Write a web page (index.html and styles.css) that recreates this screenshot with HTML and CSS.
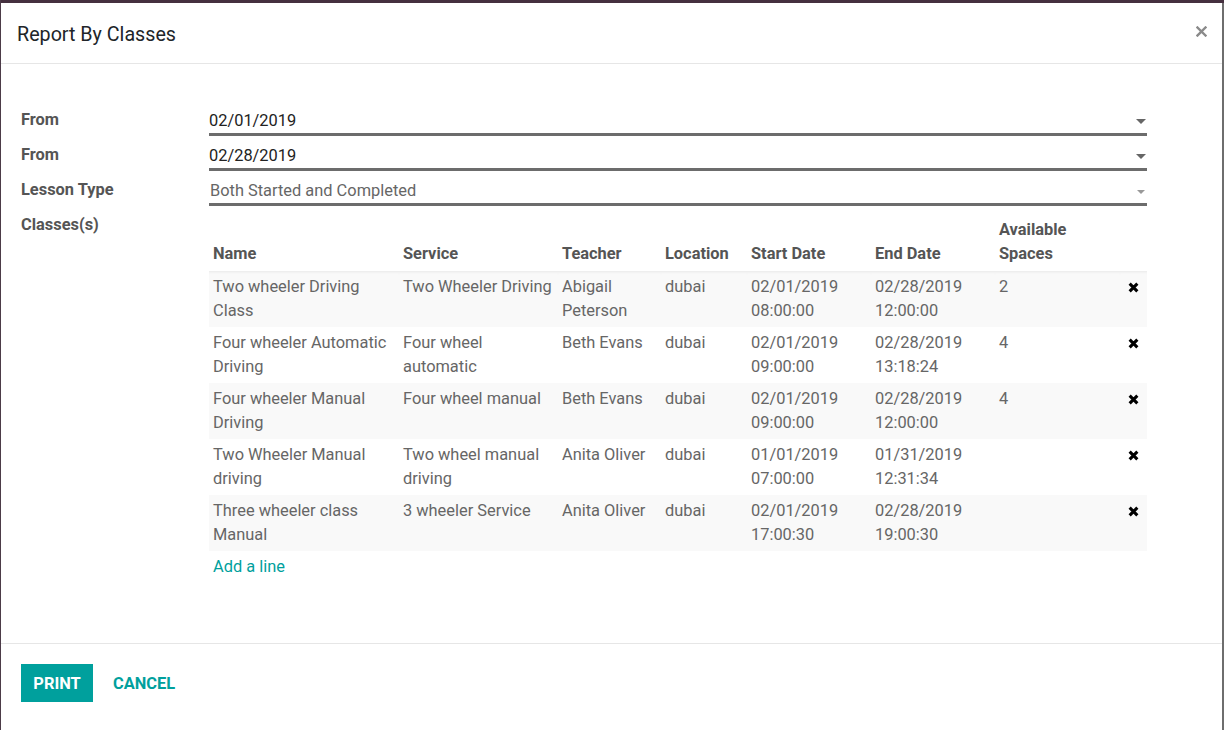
FILE: index.html
```html
<!DOCTYPE html>
<html>
<head>
<meta charset="utf-8">
<link rel="stylesheet" href="styles.css">
</head>
<body>
<div class="topbar"></div>
<div class="modal">
  <div class="modal-header">
    <h4 class="modal-title">Report By Classes</h4>
    <button class="close" aria-label="Close">
      <svg width="11" height="11" viewBox="0 0 11 11"><path d="M1.5 1.5 L9.5 9.5 M9.5 1.5 L1.5 9.5" stroke="#8a8a8a" stroke-width="2.4" stroke-linecap="square"/></svg>
    </button>
  </div>
  <div class="modal-body">
    <div class="field-row">
      <label class="field-label">From</label>
      <div class="field-input">
        <span class="value">02/01/2019</span>
        <span class="caret"></span>
      </div>
    </div>
    <div class="field-row">
      <label class="field-label">From</label>
      <div class="field-input">
        <span class="value">02/28/2019</span>
        <span class="caret"></span>
      </div>
    </div>
    <div class="field-row">
      <label class="field-label">Lesson Type</label>
      <div class="field-input select">
        <span class="value">Both Started and Completed</span>
        <span class="caret small"></span>
      </div>
    </div>
    <div class="field-row classes">
      <label class="field-label">Classes(s)</label>
      <div class="field-table">
        <table class="list">
          <colgroup>
            <col style="width:190px"><col style="width:159px"><col style="width:103px"><col style="width:86px"><col style="width:124px"><col style="width:124px"><col style="width:125px"><col style="width:27px">
          </colgroup>
          <thead>
            <tr>
              <th>Name</th><th>Service</th><th>Teacher</th><th>Location</th><th>Start Date</th><th>End Date</th><th>Available Spaces</th><th></th>
            </tr>
          </thead>
          <tbody>
            <tr class="odd first">
              <td>Two wheeler Driving Class</td><td>Two Wheeler Driving</td><td>Abigail Peterson</td><td>dubai</td><td>02/01/2019 08:00:00</td><td>02/28/2019 12:00:00</td><td>2</td><td class="del"><svg class="x" viewBox="0 0 10 10"><path d="M1.5 1.5 L8.5 8.5 M8.5 1.5 L1.5 8.5" stroke="#000" stroke-width="2.8"/></svg></td>
            </tr>
            <tr>
              <td>Four wheeler Automatic Driving</td><td>Four wheel automatic</td><td>Beth Evans</td><td>dubai</td><td>02/01/2019 09:00:00</td><td>02/28/2019 13:18:24</td><td>4</td><td class="del"><svg class="x" viewBox="0 0 10 10"><path d="M1.5 1.5 L8.5 8.5 M8.5 1.5 L1.5 8.5" stroke="#000" stroke-width="2.8"/></svg></td>
            </tr>
            <tr class="odd">
              <td>Four wheeler Manual Driving</td><td>Four wheel manual</td><td>Beth Evans</td><td>dubai</td><td>02/01/2019 09:00:00</td><td>02/28/2019 12:00:00</td><td>4</td><td class="del"><svg class="x" viewBox="0 0 10 10"><path d="M1.5 1.5 L8.5 8.5 M8.5 1.5 L1.5 8.5" stroke="#000" stroke-width="2.8"/></svg></td>
            </tr>
            <tr>
              <td>Two Wheeler Manual driving</td><td>Two wheel manual driving</td><td>Anita Oliver</td><td>dubai</td><td>01/01/2019 07:00:00</td><td>01/31/2019 12:31:34</td><td></td><td class="del"><svg class="x" viewBox="0 0 10 10"><path d="M1.5 1.5 L8.5 8.5 M8.5 1.5 L1.5 8.5" stroke="#000" stroke-width="2.8"/></svg></td>
            </tr>
            <tr class="odd">
              <td>Three wheeler class Manual</td><td>3 wheeler Service</td><td>Anita Oliver</td><td>dubai</td><td>02/01/2019 17:00:30</td><td>02/28/2019 19:00:30</td><td></td><td class="del"><svg class="x" viewBox="0 0 10 10"><path d="M1.5 1.5 L8.5 8.5 M8.5 1.5 L1.5 8.5" stroke="#000" stroke-width="2.8"/></svg></td>
            </tr>
          </tbody>
        </table>
        <a class="add-line" href="#">Add a line</a>
      </div>
    </div>
  </div>
  <div class="modal-footer">
    <button class="btn btn-primary">PRINT</button>
    <button class="btn btn-link">CANCEL</button>
  </div>
</div>
</body>
</html>
```

FILE: styles.css
```css
html, body {
  margin: 0;
  padding: 0;
}
body {
  width: 1224px;
  height: 730px;
  overflow: hidden;
  background: #6e6e6e;
  font-family: Roboto, "Noto Sans", sans-serif;
  font-size: 16.4px;
  color: #666;
}
.topbar {
  height: 3px;
  background: #45303f;
}
.modal {
  width: 1221px;
  height: 727px;
  margin-left: 1px;
  background: #fff;
  display: flex;
  flex-direction: column;
  position: relative;
}
.modal::before {
  content: "";
  position: absolute;
  left: -1px;
  top: -3px;
  width: 1px;
  height: 730px;
  background: #4c3b48;
}
.modal-header {
  height: 60px;
  border-bottom: 1px solid #e6e6e6;
  display: flex;
  align-items: center;
  justify-content: space-between;
  padding: 0 15px 0 16px;
}
.modal-title {
  margin: 0;
  font-size: 19.7px;
  font-weight: 400;
  color: #212529;
  padding-top: 2px;
}
.close {
  border: 0;
  background: none;
  padding: 0;
  width: 12px;
  height: 12px;
  display: flex;
  align-items: center;
  justify-content: center;
  margin-top: -3px;
}
.modal-body {
  flex: 1;
  padding: 37px 75px 0 20px;
}
.field-row {
  display: flex;
  align-items: flex-start;
}
.field-label {
  width: 188px;
  flex: none;
  padding-top: 7px;
  line-height: 24px;
  font-weight: 700;
  color: #555;
}
.field-input {
  flex: 1;
  display: flex;
  align-items: center;
  justify-content: space-between;
  padding: 8px 0 0 0;
  height: 24px;
  line-height: 24px;
  border-bottom: 3px solid #6c6c6c;
  color: #222;
}
.field-input.select {
  color: #666;
}
.field-input .value {
  flex: 1;
}
.field-input.select .value {
  padding-left: 1px;
}
.caret {
  width: 0;
  height: 0;
  border-left: 5px solid transparent;
  border-right: 5px solid transparent;
  border-top: 5px solid #666;
  margin-right: 1px;
  margin-top: 1px;
}
.caret.small {
  border-left-width: 4px;
  border-right-width: 4px;
  border-top: 4px solid #999;
  margin-right: 2px;
}
.field-table {
  flex: 1;
  padding-top: 8px;
}
table.list {
  width: 938px;
  border-collapse: collapse;
  table-layout: fixed;
}
table.list th {
  text-align: left;
  vertical-align: bottom;
  font-weight: 700;
  color: #555;
  padding: 4px 4px 5px 4px;
  line-height: 24px;
}
table.list td {
  vertical-align: top;
  padding: 4px;
  line-height: 24px;
  color: #666;
}
table.list tr.odd td {
  background: #f9f9f9;
}
table.list tr.first td {
  box-shadow: inset 0 3px 3px -2px rgba(0, 0, 0, 0.07);
}
table.list td.del {
  padding: 4px 0 0 0;
}
.x {
  width: 11px;
  height: 11px;
  display: block;
  margin: 7px 0 0 8px;
}
.add-line {
  display: inline-block;
  margin: 4px 0 0 4px;
  line-height: 24px;
  color: #00a09d;
  text-decoration: none;
}
.modal-footer {
  border-top: 1px solid #e6e6e6;
  height: 87px;
  flex: none;
  padding: 20px 20px 0 20px;
  box-sizing: border-box;
  display: flex;
  align-items: flex-start;
  gap: 2px;
}
.btn {
  font-family: Roboto, "Noto Sans", sans-serif;
  font-size: 16.4px;
  font-weight: 700;
  height: 38px;
  border: 0;
  padding: 0 12px;
  cursor: pointer;
}
.btn-primary {
  background: #00a09d;
  color: #fff;
  width: 72px;
}
.btn-link {
  background: none;
  color: #00a09d;
  padding: 0 18px;
}
```
